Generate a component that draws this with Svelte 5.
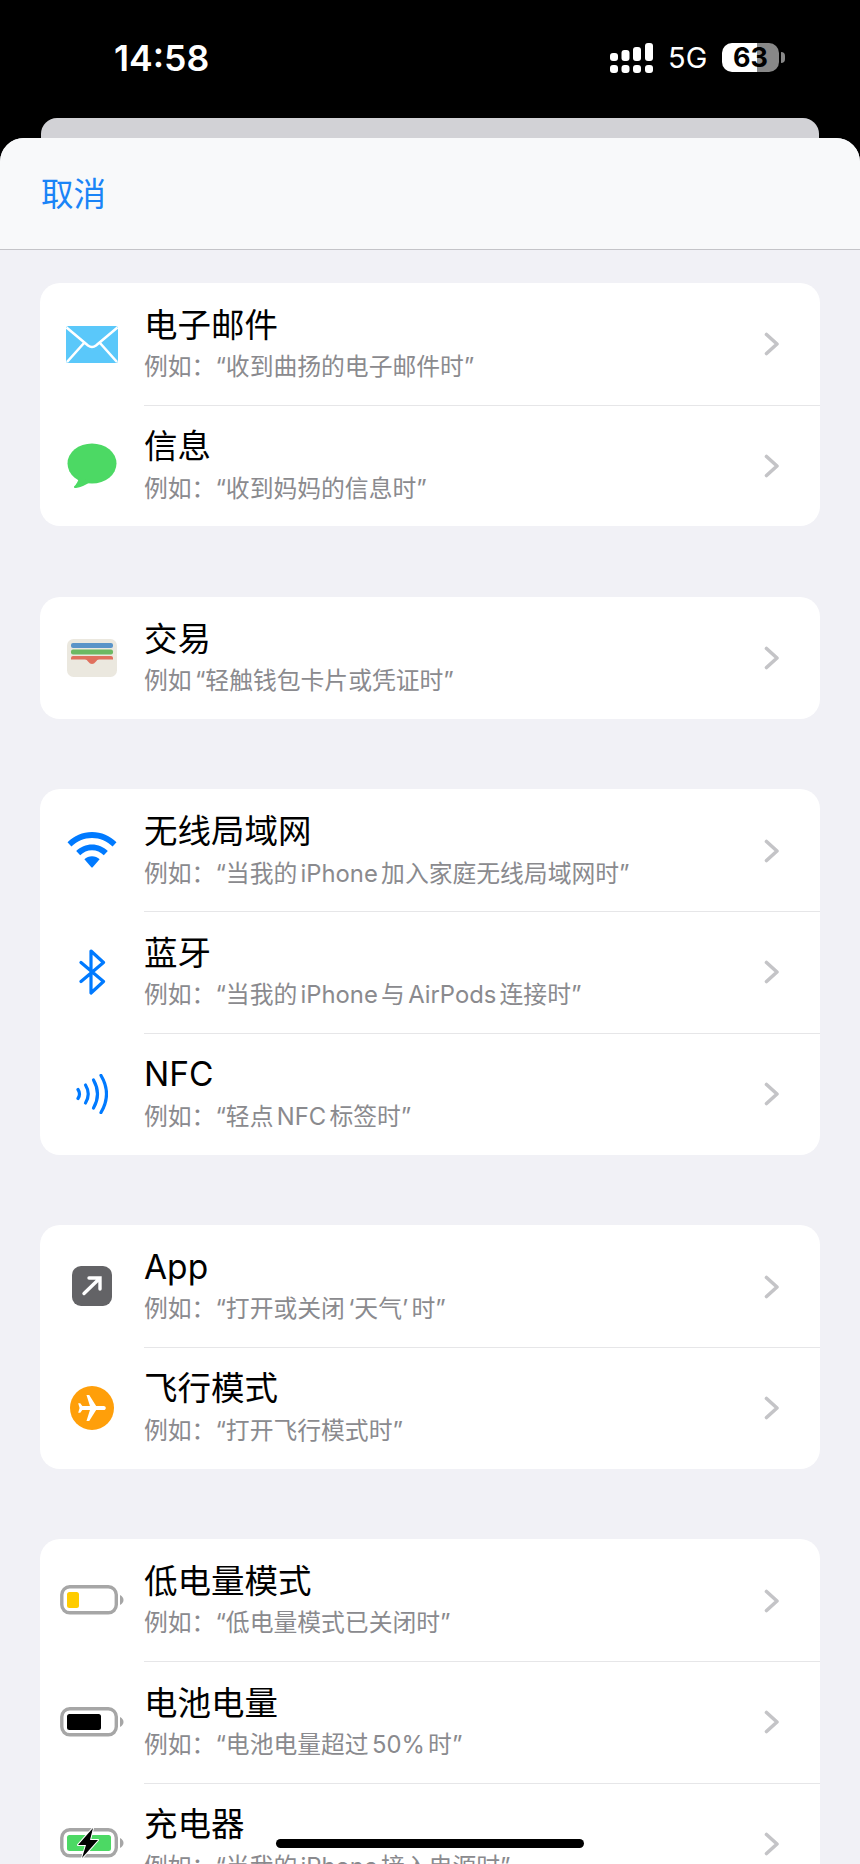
<script>
  const groups = [
    [
      { icon: 'mail', t: '电子邮件', s: '例如：“收到曲扬的电子邮件时”' },
      { icon: 'msg', t: '信息', s: '例如：“收到妈妈的信息时”' }
    ],
    [{ icon: 'wallet', t: '交易', s: '例如 “轻触钱包卡片或凭证时”' }],
    [
      { icon: 'wifi', t: '无线局域网', s: '例如：“当我的 iPhone 加入家庭无线局域网时”' },
      { icon: 'bt', t: '蓝牙', s: '例如：“当我的 iPhone 与 AirPods 连接时”' },
      { icon: 'nfc', t: 'NFC', s: '例如：“轻点 NFC 标签时”' }
    ],
    [
      { icon: 'app', t: 'App', s: '例如：“打开或关闭 ‘天气’ 时”' },
      { icon: 'plane', t: '飞行模式', s: '例如：“打开飞行模式时”' }
    ],
    [
      { icon: 'low', t: '低电量模式', s: '例如：“低电量模式已关闭时”' },
      { icon: 'mid', t: '电池电量', s: '例如：“电池电量超过 50% 时”' },
      { icon: 'chg', t: '充电器', s: '例如：“当我的 iPhone 接入电源时”' }
    ]
  ];
</script>

<div class="screen">
  <header class="status">
    <span class="time">14:58</span>
    <div class="status-right">
      <svg class="signal" width="43" height="30" viewBox="0 0 43 30" fill="#fff">
        <rect x="0" y="22" width="8" height="8" rx="3" />
        <rect x="11.5" y="22" width="8" height="8" rx="3" />
        <rect x="23" y="22" width="8" height="8" rx="3" />
        <rect x="35" y="22" width="8" height="8" rx="3" />
        <rect x="0" y="10" width="8" height="8" rx="3" />
        <rect x="11.5" y="7" width="8" height="11" rx="3" />
        <rect x="23" y="4" width="8" height="14" rx="3" />
        <rect x="35" y="0" width="8" height="18" rx="3" />
      </svg>
      <span class="net">5G</span>
      <div class="battery"><span>63</span></div>
      <i class="nub"></i>
    </div>
  </header>
  <div class="back-card"></div>
  <main class="sheet">
    <nav class="nav"><button class="cancel">取消</button></nav>
    <div class="list">
      {#each groups as group}
        <section class="group">
          {#each group as row, i}
            <div class="row">
              <div class="icon">
                {#if row.icon === 'mail'}
                  <svg class="nudge" width="52" height="37" viewBox="0 0 52 37">
                    <rect width="52" height="37" rx="2.5" fill="#5ac8fa" />
                    <path d="M0.5 1.5 L22 19.5 Q26 22.5 30 19.5 L51.5 1.5 M1 36 L18 17 M51 36 L34 17" fill="none" stroke="#fff" stroke-width="2.6" />
                  </svg>
                {:else if row.icon === 'msg'}
                  <svg width="50" height="46" viewBox="0 0 50 46">
                    <ellipse cx="25" cy="20.5" rx="24.5" ry="20" fill="#4cd964" />
                    <path d="M12 34 Q11 40 7 43.5 Q6.5 45.5 9 45 Q16 44 23 39 Z" fill="#4cd964" />
                  </svg>
                {:else if row.icon === 'wallet'}
                  <svg width="50" height="38" viewBox="0 0 50 38">
                    <rect width="50" height="38" rx="6.5" fill="#ebe8df" />
                    <rect x="4" y="4" width="42" height="5" rx="2" fill="#5a94c8" />
                    <rect x="4" y="10.5" width="42" height="5" rx="2" fill="#6cb963" />
                    <path d="M6 17 H44 Q46 17 46 19 V20.5 H32 Q30 20.5 29 22.5 Q27 25 25 25 Q23 25 21 22.5 Q20 20.5 18 20.5 H4 V19 Q4 17 6 17 Z" fill="#e0705e" />
                  </svg>
                {:else if row.icon === 'wifi'}
                  <svg width="50" height="36" viewBox="0 0 50 36" fill="#007aff">
                    <path d="M25 0 C34.5 0 43 3.8 49.5 10.2 L45.6 14.6 C40.2 9.3 33 6 25 6 C17 6 9.8 9.3 4.4 14.6 L0.5 10.2 C7 3.8 15.5 0 25 0 Z" />
                    <path d="M25 12.4 C31 12.4 36.6 14.8 40.8 19 L36.8 23.3 C33.7 20.2 29.5 18.3 25 18.3 C20.5 18.3 16.3 20.2 13.2 23.3 L9.2 19 C13.4 14.8 19 12.4 25 12.4 Z" />
                    <path d="M25 24.2 C27.9 24.2 30.6 25.4 32.6 27.3 L25.9 35 Q25 36 24.1 35 L17.4 27.3 C19.4 25.4 22.1 24.2 25 24.2 Z" />
                  </svg>
                {:else if row.icon === 'bt'}
                  <svg width="28" height="46" viewBox="0 0 28 46" fill="none" stroke="#007aff" stroke-width="3.2" stroke-linejoin="round" stroke-linecap="round">
                    <path d="M3 13.5 L25.5 32.5 L13 44 V2 L25.5 13.5 L3 32.5" />
                  </svg>
                {:else if row.icon === 'nfc'}
                  <svg width="32" height="40" viewBox="0 0 32 40" fill="none" stroke="#007aff" stroke-width="3.2" stroke-linecap="round">
                    <path d="M2 15.5 Q5 20 2 24.5" />
                    <path d="M9.5 11 Q15 20 9.5 29" />
                    <path d="M17.5 6 Q25.5 20 17.5 34" />
                    <path d="M25 1.5 Q36 20 25 38.5" />
                  </svg>
                {:else if row.icon === 'app'}
                  <svg width="40" height="40" viewBox="0 0 40 40">
                    <rect width="40" height="40" rx="9" fill="#636366" />
                    <path d="M12 27.5 L26.5 13.5 M17 12 H28 V23" fill="none" stroke="#fff" stroke-width="3.4" stroke-linecap="round" />
                  </svg>
                {:else if row.icon === 'plane'}
                  <svg width="44" height="44" viewBox="0 0 44 44">
                    <circle cx="22" cy="22" r="22" fill="#ff9f0a" />
                    <g transform="translate(22 22) rotate(90) scale(1.38) translate(-11.5 -12)">
                      <path d="M21 16v-2l-8-5V3.5c0-.83-.67-1.5-1.5-1.5S10 2.67 10 3.5V9l-8 5v2l8-2.5V19l-2 1.5V22l3.5-1 3.5 1v-1.5L13 19v-5.5l8 2.5z" fill="#fff" />
                    </g>
                  </svg>
                {:else}
                  <svg width="64" height="30" viewBox="0 0 64 30">
                    <rect x="1.8" y="1.8" width="54.5" height="26" rx="8" fill="#fff" stroke="#a6a6a6" stroke-width="3.4" />
                    {#if row.icon === 'low'}
                      <rect x="7" y="7" width="12" height="16" rx="2.5" fill="#ffcc00" />
                    {:else if row.icon === 'mid'}
                      <rect x="7" y="7" width="34" height="16" rx="2.5" fill="#000" />
                    {:else}
                      <rect x="7" y="7" width="44" height="16" rx="2.5" fill="#4cd964" />
                      <path d="M33 0 L18 17 H26 L22 30 L38 12 H30 Z" fill="#000" stroke="#fff" stroke-width="2" stroke-linejoin="round" paint-order="stroke" />
                    {/if}
                    <path d="M60 10 Q63.5 12 63.5 15 Q63.5 18 60 20 Z" fill="#a6a6a6" />
                  </svg>
                {/if}
              </div>
              <div class="main" class:first={i === 0}>
                <div class="texts">
                  <div class="title">{row.t}</div>
                  <div class="sub">{row.s}</div>
                </div>
                <svg class="chev" width="15" height="24" viewBox="0 0 15 24" fill="none" stroke="#c4c4c7" stroke-width="3.6" stroke-linecap="round" stroke-linejoin="round">
                  <path d="M2.5 2.5 L13 12 L2.5 21.5" />
                </svg>
              </div>
            </div>
          {/each}
        </section>
      {/each}
    </div>
  </main>
  <div class="home"></div>
</div>

<style>
  :global(body) { background: #000; }
  .screen {
    position: relative;
    width: 860px;
    height: 1864px;
    overflow: hidden;
    background: #000;
    display: flex;
    flex-direction: column;
    font-family: Inter, "Noto Sans CJK SC", sans-serif;
  }
  .status {
    height: 118px;
    flex: none;
    display: flex;
    justify-content: space-between;
    align-items: flex-start;
    color: #fff;
    padding: 0 75px 0 114px;
    box-sizing: border-box;
  }
  .time {
    font-size: 35.6px;
    font-weight: 600;
    line-height: 40px;
    margin-top: 39px;
    letter-spacing: 0;
  }
  .status-right { display: flex; align-items: flex-start; margin-top: 43px; }
  .signal { display: block; }
  .net { font-size: 29px; line-height: 30px; margin-left: 15px; width: 54px; }
  .battery {
    width: 57px;
    height: 29px;
    border-radius: 10px;
    background: linear-gradient(90deg, #fff 0 61%, #888 61% 100%);
    display: flex;
    align-items: center;
    justify-content: center;
  }
  .battery span { font-size: 27px; font-weight: 700; color: #000; line-height: 29px; }
  .nub {
    display: block;
    width: 4px;
    height: 11px;
    margin: 9px 0 0 2px;
    background: #888;
    border-radius: 0 5px 5px 0;
  }
  .back-card {
    flex: none;
    height: 40px;
    margin: 0 41px -20px;
    background: #d2d2d6;
    border-radius: 16px 16px 0 0;
  }
  .sheet {
    position: relative;
    flex: 1;
    background: #f1f1f6;
    border-radius: 24px 24px 0 0;
    overflow: hidden;
  }
  .nav {
    height: 112px;
    box-sizing: border-box;
    background: #f8f9fa;
    border-bottom: 1px solid #c4c4c8;
    display: flex;
    align-items: center;
    padding: 3px 41px 0;
  }
  .cancel {
    all: unset;
    font-size: 32.5px;
    line-height: 40px;
    color: #1a84f7;
  }
  .list {
    padding: 33px 40px 0;
    display: flex;
    flex-direction: column;
    gap: 70.7px;
  }
  .group {
    background: #fff;
    border-radius: 20px;
    overflow: hidden;
    flex: none;
  }
  .row {
    height: 121.7px;
    display: flex;
    align-items: stretch;
  }
  .icon {
    width: 104px;
    flex: none;
    display: flex;
    align-items: center;
    justify-content: center;
  }
  .icon svg { display: block; }
  .icon svg.nudge { margin-top: 2px; }
  .main {
    flex: 1;
    min-width: 0;
    display: flex;
    align-items: center;
    justify-content: space-between;
    border-top: 1.5px solid #e6e6e8;
    padding: 0 41px 0 0;
  }
  .main.first { border-top-color: transparent; }
  .texts { padding-bottom: 2px; }
  .title {
    font-size: 33.5px;
    line-height: 44px;
    color: #000;
  }
  .sub {
    font-size: 23.8px;
    line-height: 34px;
    margin-top: 3.5px;
    color: #8a8a8e;
    word-spacing: -3.4px;
  }
  .chev { flex: none; }
  .home {
    position: absolute;
    left: 276px;
    top: 1839px;
    width: 308px;
    height: 9px;
    border-radius: 5px;
    background: #000;
  }
</style>
